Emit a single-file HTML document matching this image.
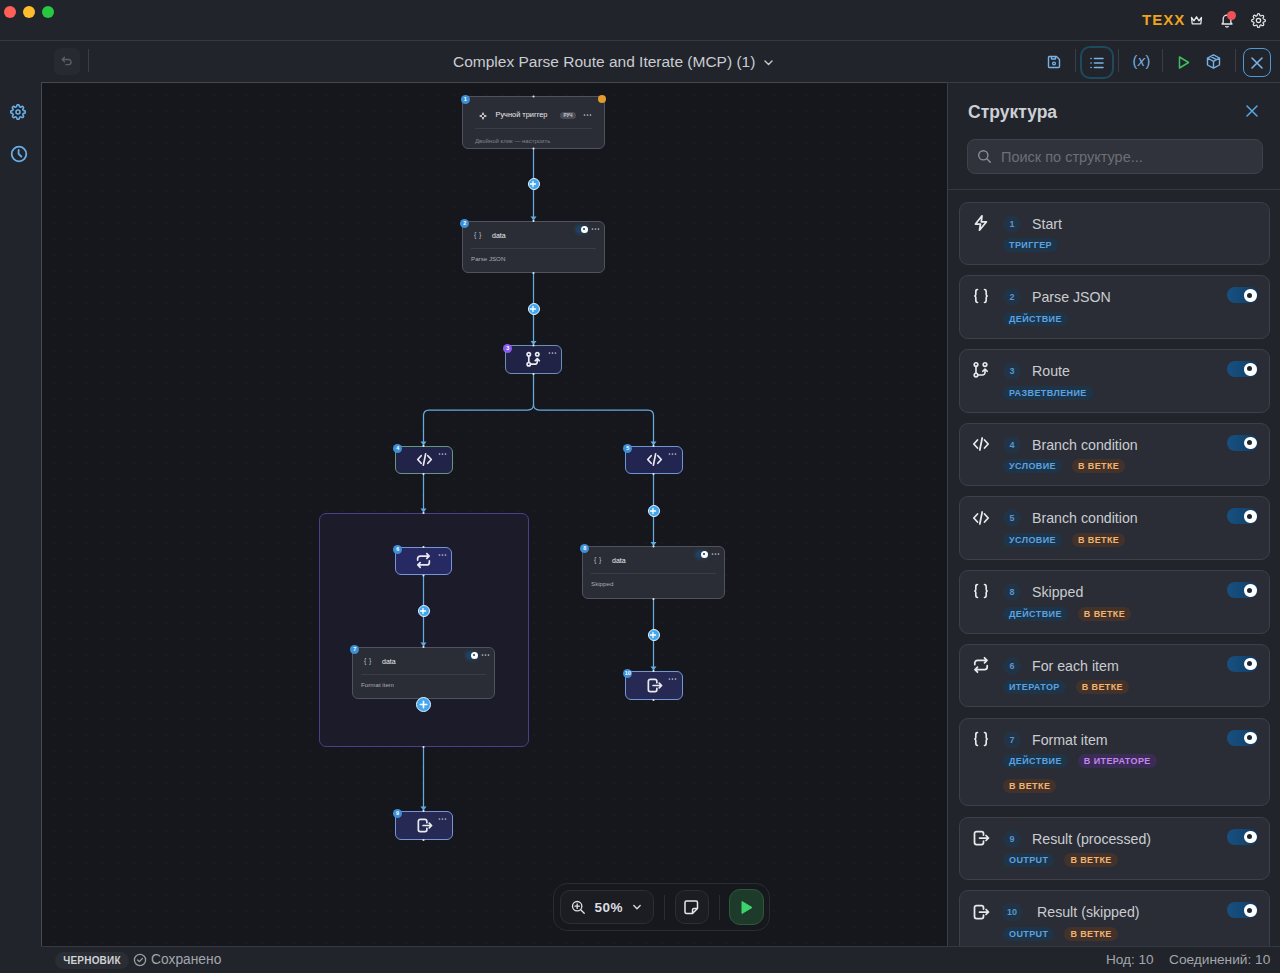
<!DOCTYPE html>
<html><head><meta charset="utf-8">
<style>
*{box-sizing:border-box;margin:0;padding:0}
html,body{width:1280px;height:973px;overflow:hidden;background:#21242b;font-family:"Liberation Sans",sans-serif;color:#d0d3d8}
.abs{position:absolute}
#titlebar{position:absolute;left:0;top:0;width:1280px;height:40px;background:#21242b}
.tl{position:absolute;top:6px;width:12px;height:12px;border-radius:50%}
#toolbar{position:absolute;left:0;top:40px;width:1280px;height:42px;background:#21242b;border-top:1px solid #353841}
#sidebar{position:absolute;left:0;top:82px;width:41px;height:891px;background:#21242b}
#canvas{position:absolute;left:41px;top:82px;width:907px;height:864px;background-color:#16171c;border-left:1px solid #464950;border-top:1px solid #464950;overflow:hidden;
 background-image:radial-gradient(circle,#1b1c22 0.9px,transparent 1.1px);background-size:16px 16px;background-position:4px 4px}
#panel{position:absolute;left:947px;top:82px;width:333px;height:864px;background:#21242b;border-left:1px solid #3a3d45;border-top:1px solid #3a3d45;overflow:hidden}
#status{position:absolute;left:41px;top:946px;width:1239px;height:27px;background:#21242b;border-top:1px solid #353841}
.card{position:absolute;left:11px;width:311px;border-radius:9px;background:#2a2d35;border:1px solid #3d4049}
.num{position:absolute;top:12px;height:18px;border-radius:9px;background:#223345;color:#5597d2;font-size:9px;font-weight:bold;line-height:18px;text-align:center}
.ctitle{position:absolute;left:72px;top:12px;font-size:14.2px;color:#c9ccd1;white-space:nowrap;line-height:18px}
.brow{position:absolute;left:43px;display:flex;gap:10px}
.badge{display:block;height:14px;border-radius:7px;padding:0 6px;font-size:9px;font-weight:bold;letter-spacing:0.4px;line-height:14px;white-space:nowrap}
.tog{position:absolute;left:267px;top:11px;width:31px;height:16px;border-radius:8px;background:linear-gradient(90deg,#175080,#134672 60%,#0f3558)}
.knob{position:absolute;left:17px;top:2px;width:12.5px;height:12.5px;border-radius:50%;background:#fff;border:3.3px solid #fff}
.knob::after{content:"";position:absolute;left:0.45px;top:0.45px;width:5px;height:5px;border-radius:50%;background:#1d2733}
.dnode{position:absolute;border-radius:6px;background:#2a2d35;border:1.5px solid #4f535d}
.dsep{position:absolute;left:8px;right:8px;top:25.5px;height:1px;background:#3a3d46}
.dtitle{position:absolute;left:29px;top:8.5px;font-size:7px;font-weight:normal;color:#eceef1;line-height:10px;white-space:nowrap}
.dsub{position:absolute;left:8px;top:32.4px;font-size:6.2px;color:#a9acb2;line-height:9px;white-space:nowrap}
.dtog{position:absolute;right:16.5px;top:3.5px;width:12px;height:7px;border-radius:3.5px;background:#1b4264;box-shadow:0 0 4px 1px rgba(40,110,170,0.3)}
.dknob{position:absolute;right:0px;top:0;width:7px;height:7px;border-radius:50%;background:#fff}
.dknob::after{content:"";position:absolute;left:2.25px;top:2.25px;width:2.5px;height:2.5px;border-radius:50%;background:#2a2d35}
.snode{position:absolute;border-radius:6px;border:1.8px solid}
.sico{position:absolute;left:50%;top:50%;width:17px;height:17px;margin-left:-8.5px;margin-top:-9px}
.sico svg{display:block}
.plus{position:absolute;border-radius:50%;background:#40a8f0;border:1.2px solid #eaf4fc}
.plus svg{position:absolute;left:-1.2px;top:-1.2px}
.nbadge{position:absolute;width:9px;height:9px;border-radius:50%;font-size:5.5px;font-weight:bold;color:#fff;text-align:center;line-height:9px}
.ndots{position:absolute;font-size:9px;color:#b4b7bd;line-height:6px;letter-spacing:0px}
</style></head><body>
<div id="titlebar">
  <div class="tl" style="left:3.5px;background:#fe5f57"></div>
  <div class="tl" style="left:22.5px;background:#febc2e"></div>
  <div class="tl" style="left:41.5px;background:#28c840"></div>
  <div class="abs" style="left:1142px;top:11px;font-size:15px;font-weight:bold;color:#f0a31c;letter-spacing:1.0px">TEXX</div>
  <svg class="abs" style="left:1189.5px;top:15px" width="13" height="11" viewBox="0 0 13 11"><path d="M1.5 2.5 L4 5.8 L6.5 1.8 L9 5.8 L11.5 2.5 L10.8 8.8 H2.2 Z" fill="none" stroke="#e8e8e8" stroke-width="1.3" stroke-linejoin="round"/></svg>
  <svg class="abs" style="left:1219px;top:12px" width="16" height="17" viewBox="0 0 16 17"><path d="M3 12 H13 L11.8 10.5 V7 a3.8 3.8 0 0 0 -7.6 0 V10.5 Z M6.5 14 a1.6 1.6 0 0 0 3 0" fill="none" stroke="#e6e6e6" stroke-width="1.3" stroke-linejoin="round"/></svg>
  <div class="abs" style="left:1227px;top:11px;width:9px;height:9px;border-radius:50%;background:#f0505a"></div>
  <svg class="abs" style="left:1250.5px;top:12.8px" width="15" height="15" viewBox="0 0 24 24"><path d="M12 15.5a3.5 3.5 0 1 0 0-7 3.5 3.5 0 0 0 0 7Z" fill="none" stroke="#e6e6e6" stroke-width="2"/><path d="M19.4 15a1.65 1.65 0 0 0 .33 1.82l.06.06a2 2 0 1 1-2.83 2.83l-.06-.06a1.65 1.65 0 0 0-1.82-.33 1.65 1.65 0 0 0-1 1.51V21a2 2 0 1 1-4 0v-.09A1.65 1.65 0 0 0 9 19.4a1.65 1.65 0 0 0-1.82.33l-.06.06a2 2 0 1 1-2.83-2.83l.06-.06A1.65 1.65 0 0 0 4.68 15a1.65 1.65 0 0 0-1.51-1H3a2 2 0 1 1 0-4h.09A1.65 1.65 0 0 0 4.6 9a1.65 1.65 0 0 0-.33-1.82l-.06-.06a2 2 0 1 1 2.83-2.83l.06.06A1.65 1.65 0 0 0 9 4.68a1.65 1.65 0 0 0 1-1.51V3a2 2 0 1 1 4 0v.09a1.65 1.65 0 0 0 1 1.51 1.65 1.65 0 0 0 1.82-.33l.06-.06a2 2 0 1 1 2.83 2.83l-.06.06A1.65 1.65 0 0 0 19.4 9a1.65 1.65 0 0 0 1.51 1H21a2 2 0 1 1 0 4h-.09a1.65 1.65 0 0 0-1.51 1Z" fill="none" stroke="#e6e6e6" stroke-width="2"/></svg>
</div>
<div id="toolbar">
  <div class="abs" style="left:54px;top:7px;width:26px;height:27px;border-radius:6px;background:#272a31"></div>
  <svg class="abs" style="left:60px;top:13px" width="14" height="14" viewBox="0 0 14 14"><path d="M4.5 3.2 L2.2 5.5 L4.5 7.8 M2.4 5.5 H8.5 a2.6 2.6 0 0 1 0 5.2 H6" fill="none" stroke="#5b5f68" stroke-width="1.3" stroke-linecap="round" stroke-linejoin="round"/></svg>
  <div class="abs" style="left:88px;top:8px;width:1px;height:23px;background:#3a3d45"></div>
  <div class="abs" id="wtitle" style="left:453px;top:12px;font-size:15.5px;color:#c9ccd2;white-space:nowrap">Complex Parse Route and Iterate (MCP) (1)</div>
  <svg class="abs" style="left:763px;top:16px" width="11" height="11" viewBox="0 0 11 11"><path d="M2 4 L5.5 7.5 L9 4" fill="none" stroke="#c9ccd2" stroke-width="1.4" stroke-linecap="round" stroke-linejoin="round"/></svg>
  <!-- save -->
  <svg class="abs" style="left:1046px;top:13px" width="16" height="16" viewBox="0 0 16 16"><path d="M3 2.5 H10.5 L13.5 5.5 V12.5 a1 1 0 0 1 -1 1 H3.5 a1 1 0 0 1 -1 -1 V3.5 a1 1 0 0 1 1 -1 Z M5.5 2.5 V5 H9.5 V2.5" fill="none" stroke="#78b2e4" stroke-width="1.4" stroke-linejoin="round"/><circle cx="8" cy="9.5" r="1.4" fill="none" stroke="#78b2e4" stroke-width="1.3"/></svg>
  <div class="abs" style="left:1075px;top:8px;width:1px;height:23px;background:#3a3d45"></div>
  <div class="abs" style="left:1080px;top:5px;width:34px;height:33px;border-radius:10px;border:2.5px solid #1d4a5e;background:#21242b"></div>
  <svg class="abs" style="left:1089px;top:14px" width="16" height="16" viewBox="0 0 16 16"><g stroke="#78b2e4" stroke-width="1.6" stroke-linecap="round"><path d="M5.5 3.5 H14 M5.5 8 H14 M5.5 12.5 H14"/><path d="M2 3.5 H2.1 M2 8 H2.1 M2 12.5 H2.1"/></g></svg>
  <div class="abs" style="left:1118px;top:8px;width:1px;height:23px;background:#3a3d45"></div>
  <div class="abs" style="left:1132.5px;top:12px;font-size:14.5px;color:#78b2e4;white-space:nowrap;letter-spacing:0.5px">(<span style="font-style:italic">x</span>)</div>
  <div class="abs" style="left:1162px;top:8px;width:1px;height:23px;background:#3a3d45"></div>
  <svg class="abs" style="left:1176px;top:14px" width="15" height="15" viewBox="0 0 15 15"><path d="M3.5 2 L12.5 7.5 L3.5 13 Z" fill="none" stroke="#3fbf5f" stroke-width="1.5" stroke-linejoin="round"/></svg>
  <svg class="abs" style="left:1205px;top:12px" width="17" height="17" viewBox="0 0 17 17"><path d="M8.5 1.8 L14.5 5 V12 L8.5 15.2 L2.5 12 V5 Z M2.5 5 L8.5 8.3 L14.5 5 M8.5 8.3 V15.2 M5.5 3.4 L11.5 6.6" fill="none" stroke="#78b2e4" stroke-width="1.4" stroke-linejoin="round"/></svg>
  <div class="abs" style="left:1235px;top:8px;width:1px;height:23px;background:#3a3d45"></div>
  <div class="abs" style="left:1243px;top:7px;width:28px;height:29px;border-radius:8px;border:1.5px solid #4d9ad8"></div>
  <svg class="abs" style="left:1249px;top:14px" width="16" height="16" viewBox="0 0 16 16"><path d="M3 3 L13 13 M13 3 L3 13" stroke="#78b2e4" stroke-width="1.6" stroke-linecap="round"/></svg>
</div>
<div id="sidebar">
  <svg class="abs" style="left:10.3px;top:21.8px" width="16" height="16" viewBox="0 0 24 24"><path d="M12 15a3 3 0 1 0 0-6 3 3 0 0 0 0 6Z" fill="none" stroke="#69ade6" stroke-width="2.4"/><path d="M19.4 15a1.65 1.65 0 0 0 .33 1.82l.06.06a2 2 0 1 1-2.83 2.830l-.06-.06a1.65 1.65 0 0 0-1.82-.33 1.65 1.65 0 0 0-1 1.51V21a2 2 0 1 1-4 0v-.09A1.650 1.65 0 0 0 9 19.4a1.65 1.65 0 0 0-1.82.33l-.06.06a2 2 0 1 1-2.83-2.83l.06-.06A1.65 1.65 0 0 0 4.68 15a1.65 1.65 0 0 0-1.51-1H3a2 2 0 1 1 0-4h.09A1.65 1.65 0 0 0 4.6 9a1.65 1.65 0 0 0-.33-1.82l-.06-.06a2 2 0 1 1 2.83-2.83l.06.06A1.65 1.65 0 0 0 9 4.68a1.65 1.65 0 0 0 1-1.510V3a2 2 0 1 1 4 0v.09a1.65 1.65 0 0 0 1 1.51 1.65 1.65 0 0 0 1.82-.33l.06-.06a2 2 0 1 1 2.83 2.83l-.06.06A1.65 1.65 0 0 0 19.4 9a1.65 1.65 0 0 0 1.51 1H21a2 2 0 1 1 0 4h-.09a1.65 1.65 0 0 0-1.51 1Z" fill="none" stroke="#69ade6" stroke-width="2.4"/></svg>
  <svg class="abs" style="left:9.5px;top:63.2px" width="18" height="18" viewBox="0 0 18 18"><circle cx="9" cy="9" r="7.3" fill="none" stroke="#69ade6" stroke-width="1.8"/><path d="M8.6 4.8 V8.8 L11.3 11.5" fill="none" stroke="#69ade6" stroke-width="1.8" stroke-linecap="round"/></svg>
</div>
<div id="canvas"><div class="abs" style="left:-42px;top:-83px;width:1280px;height:973px">
<div class="abs" style="left:319px;top:513px;width:210px;height:234px;border-radius:7px;background:#1c1b29;border:1.5px solid #4b3f8c"></div>
<svg class="abs" style="left:0;top:0" width="1280" height="973"><path d="M533.5 148.5 V221" stroke="#64ace0" stroke-width="1.25" fill="none"/><path d="M530.5 216.5 L536.5 216.5 L533.5 220.5 Z" fill="#64ace0"/><path d="M533.5 273 V345.5" stroke="#64ace0" stroke-width="1.25" fill="none"/><path d="M530.5 341.0 L536.5 341.0 L533.5 345.0 Z" fill="#64ace0"/><path d="M533.5 374 V404.5 Q533.5 410 527.5 410 H429 Q423.5 410 423.5 415.5 V446" stroke="#64ace0" stroke-width="1.25" fill="none"/><path d="M533.5 404.5 Q533.5 410 539.5 410 H648 Q653.5 410 653.5 415.5 V446" stroke="#64ace0" stroke-width="1.25" fill="none"/><path d="M420.5 441.5 L426.5 441.5 L423.5 445.5 Z" fill="#64ace0"/><path d="M650.5 441.5 L656.5 441.5 L653.5 445.5 Z" fill="#64ace0"/><path d="M423.5 474 V513" stroke="#64ace0" stroke-width="1.25" fill="none"/><path d="M420.5 508.5 L426.5 508.5 L423.5 512.5 Z" fill="#64ace0"/><path d="M423.5 575.5 V647" stroke="#64ace0" stroke-width="1.25" fill="none"/><path d="M420.5 642.5 L426.5 642.5 L423.5 646.5 Z" fill="#64ace0"/><path d="M423.5 747 V811" stroke="#64ace0" stroke-width="1.25" fill="none"/><path d="M420.5 806.5 L426.5 806.5 L423.5 810.5 Z" fill="#64ace0"/><path d="M653.5 474 V546.5" stroke="#64ace0" stroke-width="1.25" fill="none"/><path d="M650.5 542.0 L656.5 542.0 L653.5 546.0 Z" fill="#64ace0"/><path d="M653.5 599 V671" stroke="#64ace0" stroke-width="1.25" fill="none"/><path d="M650.5 666.5 L656.5 666.5 L653.5 670.5 Z" fill="#64ace0"/></svg>
<div class="dnode" style="left:462px;top:96px;width:143px;height:53px"><div class="dtitle"></div><div class="dsub"></div></div>
<div class="dnode" style="left:462px;top:221px;width:143px;height:52px"><div class="dsep"></div><div class="dtitle">data</div><div class="dsub">Parse JSON</div><div class="dtog"><div class="dknob"></div></div></div>
<div class="dnode" style="left:352px;top:647px;width:143px;height:52px"><div class="dsep"></div><div class="dtitle">data</div><div class="dsub">Format item</div><div class="dtog"><div class="dknob"></div></div></div>
<div class="dnode" style="left:582px;top:546px;width:143px;height:53px"><div class="dsep"></div><div class="dtitle">data</div><div class="dsub">Skipped</div><div class="dtog"><div class="dknob"></div></div></div>
<div class="snode" style="left:505px;top:345px;width:57px;height:29px;border-color:#6a90b8;background:#202246"><div class="sico"><svg width="17" height="17" viewBox="0 0 18 18"><circle cx="4" cy="3.5" r="1.8" fill="none" stroke="#e9eaee" stroke-width="1.8"/><circle cx="13" cy="3.5" r="1.8" fill="none" stroke="#e9eaee" stroke-width="1.8"/><circle cx="4" cy="14" r="1.8" fill="none" stroke="#e9eaee" stroke-width="1.8"/><path d="M4 5.3 V12.2 M5.8 14 H10.5 a2.5 2.5 0 0 0 2.5 -2.5 V8.5 M10.8 10.3 L13 8 L15.2 10.3" fill="none" stroke="#e9eaee" stroke-width="1.8" stroke-linecap="round" stroke-linejoin="round"/></svg></div></div>
<div class="snode" style="left:395px;top:446px;width:58px;height:28px;border-color:#64987c;background:#212348"><div class="sico"><svg width="17" height="17" viewBox="0 0 18 18"><path d="M5.5 5 L1.8 9 L5.5 13 M12.5 5 L16.2 9 L12.5 13 M10.2 3 L7.8 15" fill="none" stroke="#e9eaee" stroke-width="1.8" stroke-linecap="round" stroke-linejoin="round"/></svg></div></div>
<div class="snode" style="left:625px;top:446px;width:58px;height:28px;border-color:#6f96d4;background:#222550"><div class="sico"><svg width="17" height="17" viewBox="0 0 18 18"><path d="M5.5 5 L1.8 9 L5.5 13 M12.5 5 L16.2 9 L12.5 13 M10.2 3 L7.8 15" fill="none" stroke="#e9eaee" stroke-width="1.8" stroke-linecap="round" stroke-linejoin="round"/></svg></div></div>
<div class="snode" style="left:395px;top:547px;width:57px;height:28px;border-color:#7396d6;background:#272a62"><div class="sico"><svg width="17" height="17" viewBox="0 0 18 18"><path d="M12.5 1.8 L15 4.3 L12.5 6.8 M2.8 8.5 V7 a2.7 2.7 0 0 1 2.7 -2.7 H15 M5.5 16.2 L3 13.7 L5.5 11.2 M15.2 9.5 V11 a2.7 2.7 0 0 1 -2.7 2.7 H3" fill="none" stroke="#e9eaee" stroke-width="1.8" stroke-linecap="round" stroke-linejoin="round"/></svg></div></div>
<div class="snode" style="left:395px;top:811px;width:58px;height:29px;border-color:#7396d6;background:#252953"><div class="sico"><svg width="17" height="17" viewBox="0 0 18 18"><path d="M11.5 6 V4.5 a2 2 0 0 0 -2 -2 H4.5 a2 2 0 0 0 -2 2 V13.5 a2 2 0 0 0 2 2 H9.5 a2 2 0 0 0 2 -2 V12 M7.5 9 H16.5 M14 6.5 L16.5 9 L14 11.5" fill="none" stroke="#e9eaee" stroke-width="1.8" stroke-linecap="round" stroke-linejoin="round"/></svg></div></div>
<div class="snode" style="left:625px;top:671px;width:58px;height:29px;border-color:#7396d6;background:#252953"><div class="sico"><svg width="17" height="17" viewBox="0 0 18 18"><path d="M11.5 6 V4.5 a2 2 0 0 0 -2 -2 H4.5 a2 2 0 0 0 -2 2 V13.5 a2 2 0 0 0 2 2 H9.5 a2 2 0 0 0 2 -2 V12 M7.5 9 H16.5 M14 6.5 L16.5 9 L14 11.5" fill="none" stroke="#e9eaee" stroke-width="1.8" stroke-linecap="round" stroke-linejoin="round"/></svg></div></div>
<svg class="abs" style="left:478.5px;top:111.5px" width="8" height="8" viewBox="0 0 9 9"><path d="M4.5 0.8 C4.9 3.3 5.7 4.1 8.2 4.5 C5.7 4.9 4.9 5.7 4.5 8.2 C4.1 5.7 3.3 4.9 0.8 4.5 C3.3 4.1 4.1 3.3 4.5 0.8 Z" fill="none" stroke="#e6e6e6" stroke-width="1.1" stroke-linejoin="round"/></svg>
<div class="abs" style="left:495.5px;top:110px;font-size:7.4px;font-weight:normal;color:#eceef1;white-space:nowrap;line-height:10px">Ручной триггер</div>
<div class="abs" style="left:560px;top:112px;width:16px;height:7px;border-radius:4px;background:#4a4d55;font-size:4.5px;font-weight:bold;color:#d0d0d0;text-align:center;line-height:7px">РУЧ</div>
<svg class="abs" style="left:583px;top:112px" width="10" height="6" viewBox="0 0 10 6"><g fill="#b8bbc2"><circle cx="1.5" cy="3" r="0.85"/><circle cx="4.5" cy="3" r="0.85"/><circle cx="7.5" cy="3" r="0.85"/></g></svg>
<div class="abs" style="left:475px;top:128px;width:117px;height:1px;background:#3a3d46"></div>
<div class="abs" style="left:475px;top:136.5px;font-size:6px;color:#80838a;white-space:nowrap;line-height:8px">Двойной клик — настроить</div>
<div class="abs" style="left:474px;top:230.3px;font-size:7px;color:#b9bbc0;white-space:nowrap;line-height:9px;letter-spacing:0.3px">{ }</div>
<svg class="abs" style="left:591.0px;top:226.0px" width="10" height="6" viewBox="0 0 10 6"><g fill="#b8bbc2"><circle cx="1.5" cy="3" r="0.85"/><circle cx="4.5" cy="3" r="0.85"/><circle cx="7.5" cy="3" r="0.85"/></g></svg>
<div class="abs" style="left:364px;top:656.3px;font-size:7px;color:#b9bbc0;white-space:nowrap;line-height:9px;letter-spacing:0.3px">{ }</div>
<svg class="abs" style="left:481.0px;top:652.0px" width="10" height="6" viewBox="0 0 10 6"><g fill="#b8bbc2"><circle cx="1.5" cy="3" r="0.85"/><circle cx="4.5" cy="3" r="0.85"/><circle cx="7.5" cy="3" r="0.85"/></g></svg>
<div class="abs" style="left:594px;top:555.3px;font-size:7px;color:#b9bbc0;white-space:nowrap;line-height:9px;letter-spacing:0.3px">{ }</div>
<svg class="abs" style="left:711.0px;top:551.0px" width="10" height="6" viewBox="0 0 10 6"><g fill="#b8bbc2"><circle cx="1.5" cy="3" r="0.85"/><circle cx="4.5" cy="3" r="0.85"/><circle cx="7.5" cy="3" r="0.85"/></g></svg>
<svg class="abs" style="left:547.5px;top:349.5px" width="10" height="6" viewBox="0 0 10 6"><g fill="#b8bbc2"><circle cx="1.5" cy="3" r="0.85"/><circle cx="4.5" cy="3" r="0.85"/><circle cx="7.5" cy="3" r="0.85"/></g></svg>
<svg class="abs" style="left:437.5px;top:450.5px" width="10" height="6" viewBox="0 0 10 6"><g fill="#b8bbc2"><circle cx="1.5" cy="3" r="0.85"/><circle cx="4.5" cy="3" r="0.85"/><circle cx="7.5" cy="3" r="0.85"/></g></svg>
<svg class="abs" style="left:667.5px;top:450.5px" width="10" height="6" viewBox="0 0 10 6"><g fill="#b8bbc2"><circle cx="1.5" cy="3" r="0.85"/><circle cx="4.5" cy="3" r="0.85"/><circle cx="7.5" cy="3" r="0.85"/></g></svg>
<svg class="abs" style="left:437.5px;top:551.5px" width="10" height="6" viewBox="0 0 10 6"><g fill="#b8bbc2"><circle cx="1.5" cy="3" r="0.85"/><circle cx="4.5" cy="3" r="0.85"/><circle cx="7.5" cy="3" r="0.85"/></g></svg>
<svg class="abs" style="left:437.5px;top:815.5px" width="10" height="6" viewBox="0 0 10 6"><g fill="#b8bbc2"><circle cx="1.5" cy="3" r="0.85"/><circle cx="4.5" cy="3" r="0.85"/><circle cx="7.5" cy="3" r="0.85"/></g></svg>
<svg class="abs" style="left:667.5px;top:675.5px" width="10" height="6" viewBox="0 0 10 6"><g fill="#b8bbc2"><circle cx="1.5" cy="3" r="0.85"/><circle cx="4.5" cy="3" r="0.85"/><circle cx="7.5" cy="3" r="0.85"/></g></svg>
<svg class="abs" style="left:0;top:0" width="1280" height="973"><circle cx="533.5" cy="96.5" r="1.05" fill="#e6e8ee"/><circle cx="533.5" cy="148.5" r="1.05" fill="#e6e8ee"/><circle cx="533.5" cy="221" r="1.05" fill="#e6e8ee"/><circle cx="533.5" cy="273" r="1.05" fill="#e6e8ee"/><circle cx="533.5" cy="345.5" r="1.05" fill="#e6e8ee"/><circle cx="533.5" cy="374" r="1.05" fill="#e6e8ee"/><circle cx="423.5" cy="446" r="1.05" fill="#e6e8ee"/><circle cx="423.5" cy="474" r="1.05" fill="#e6e8ee"/><circle cx="653.5" cy="446" r="1.05" fill="#e6e8ee"/><circle cx="653.5" cy="474" r="1.05" fill="#e6e8ee"/><circle cx="423.5" cy="513" r="1.05" fill="#e6e8ee"/><circle cx="423.5" cy="547" r="1.05" fill="#e6e8ee"/><circle cx="423.5" cy="575.5" r="1.05" fill="#e6e8ee"/><circle cx="423.5" cy="647" r="1.05" fill="#e6e8ee"/><circle cx="653.5" cy="546.5" r="1.05" fill="#e6e8ee"/><circle cx="653.5" cy="599" r="1.05" fill="#e6e8ee"/><circle cx="653.5" cy="671" r="1.05" fill="#e6e8ee"/><circle cx="653.5" cy="700" r="1.05" fill="#e6e8ee"/><circle cx="423.5" cy="747" r="1.05" fill="#e6e8ee"/><circle cx="423.5" cy="811" r="1.05" fill="#e6e8ee"/><circle cx="423.5" cy="840" r="1.05" fill="#e6e8ee"/></svg>
<div class="plus" style="left:527.5px;top:178.4px;width:12px;height:12px"><svg width="12" height="12" viewBox="0 0 12 12"><path d="M6 3.4 V8.6 M3.4 6 H8.6" stroke="#fff" stroke-width="1.3" stroke-linecap="round"/></svg></div>
<div class="plus" style="left:527.5px;top:303px;width:12px;height:12px"><svg width="12" height="12" viewBox="0 0 12 12"><path d="M6 3.4 V8.6 M3.4 6 H8.6" stroke="#fff" stroke-width="1.3" stroke-linecap="round"/></svg></div>
<div class="plus" style="left:647.5px;top:504.8px;width:12px;height:12px"><svg width="12" height="12" viewBox="0 0 12 12"><path d="M6 3.4 V8.6 M3.4 6 H8.6" stroke="#fff" stroke-width="1.3" stroke-linecap="round"/></svg></div>
<div class="plus" style="left:647.5px;top:629.3px;width:12px;height:12px"><svg width="12" height="12" viewBox="0 0 12 12"><path d="M6 3.4 V8.6 M3.4 6 H8.6" stroke="#fff" stroke-width="1.3" stroke-linecap="round"/></svg></div>
<div class="plus" style="left:417.5px;top:605px;width:12px;height:12px"><svg width="12" height="12" viewBox="0 0 12 12"><path d="M6 3.4 V8.6 M3.4 6 H8.6" stroke="#fff" stroke-width="1.3" stroke-linecap="round"/></svg></div>
<div class="plus" style="left:416.0px;top:696.9px;width:15.0px;height:15.0px"><svg width="15.0" height="15.0" viewBox="0 0 12 12"><path d="M6 3.4 V8.6 M3.4 6 H8.6" stroke="#fff" stroke-width="1.3" stroke-linecap="round"/></svg></div>
<div class="nbadge" style="left:460.9px;top:94.9px;background:#3d8fd6">1</div>
<div class="nbadge" style="left:460.3px;top:218.5px;background:#3d8fd6">2</div>
<div class="nbadge" style="left:503.4px;top:343.6px;background:#8a5cf0">3</div>
<div class="nbadge" style="left:393.2px;top:444.0px;background:#3d8fd6">4</div>
<div class="nbadge" style="left:623.2px;top:444.0px;background:#3d8fd6">5</div>
<div class="nbadge" style="left:393.2px;top:545.0px;background:#3d8fd6">6</div>
<div class="nbadge" style="left:350.3px;top:645.0px;background:#3d8fd6">7</div>
<div class="nbadge" style="left:580.2px;top:544.0px;background:#3d8fd6">8</div>
<div class="nbadge" style="left:393.0px;top:809.0px;background:#3d8fd6">9</div>
<div class="nbadge" style="left:623.2px;top:669.0px;background:#3d8fd6">10</div>
<div class="abs" style="left:598px;top:95px;width:8px;height:8px;border-radius:50%;background:#e39a2e"></div>
<div class="abs" style="left:553px;top:883px;width:217px;height:48px;border-radius:14px;background:#17181d;border:1px solid #2a2c33"></div>
<div class="abs" style="left:560px;top:890px;width:94px;height:34px;border-radius:10px;background:#1c1d22;border:1px solid #2c2e35"></div>
<svg class="abs" style="left:571px;top:900px" width="15" height="15" viewBox="0 0 17 17"><circle cx="7" cy="7" r="5.3" fill="none" stroke="#e0e1e4" stroke-width="1.5"/><path d="M11 11 L15 15 M7 4.5 V9.5 M4.5 7 H9.5" stroke="#e0e1e4" stroke-width="1.5" stroke-linecap="round"/></svg>
<div class="abs" style="left:594.5px;top:899.5px;font-size:13.5px;font-weight:bold;color:#dcdde0;white-space:nowrap;line-height:16px;letter-spacing:0.5px">50%</div>
<svg class="abs" style="left:632px;top:902px" width="10" height="10" viewBox="0 0 10 10"><path d="M1.8 3.5 L5 6.7 L8.2 3.5" fill="none" stroke="#d6d7db" stroke-width="1.4" stroke-linecap="round" stroke-linejoin="round"/></svg>
<div class="abs" style="left:664px;top:895px;width:1px;height:25px;background:#2a2c33"></div>
<div class="abs" style="left:675px;top:890px;width:34px;height:34px;border-radius:10px;background:#1c1d22;border:1px solid #2c2e35"></div>
<svg class="abs" style="left:683px;top:899px" width="17" height="17" viewBox="0 0 17 17"><path d="M3.5 2 H13 a1.5 1.5 0 0 1 1.5 1.5 V9.5 L9.5 14.5 H3.5 a1.5 1.5 0 0 1 -1.5 -1.5 V3.5 a1.5 1.5 0 0 1 1.5 -1.5 Z M14.5 9.5 H11 a1.5 1.5 0 0 0 -1.5 1.5 V14.5" fill="none" stroke="#e6e7ea" stroke-width="1.5" stroke-linejoin="round"/></svg>
<div class="abs" style="left:718.5px;top:895px;width:1px;height:25px;background:#2a2c33"></div>
<div class="abs" style="left:729px;top:889px;width:35px;height:36px;border-radius:11px;background:#1d3a2a;border:1px solid #2b5a3b"></div>
<svg class="abs" style="left:738px;top:899px" width="17" height="17" viewBox="0 0 17 17"><path d="M4 2.5 L14 8.5 L4 14.5 Z" fill="#3ed26c" stroke="#3ed26c" stroke-width="1" stroke-linejoin="round"/></svg>
</div></div>
<div id="panel">
<div class="abs" style="left:20px;top:19px;font-size:17.5px;font-weight:bold;color:#cdd0d5;white-space:nowrap">Структура</div>
<svg class="abs" style="left:297px;top:21px" width="14" height="14" viewBox="0 0 14 14"><path d="M2 2 L12 12 M12 2 L2 12" stroke="#5aa7e6" stroke-width="1.5" stroke-linecap="round"/></svg>
<div class="abs" style="left:19px;top:56px;width:296px;height:35px;border-radius:8px;background:#30333c;border:1px solid #3f424b"></div>
<svg class="abs" style="left:29px;top:66px" width="15" height="15" viewBox="0 0 15 15"><circle cx="6.3" cy="6.3" r="4.6" fill="none" stroke="#8a8d94" stroke-width="1.4"/><path d="M9.8 9.8 L13.3 13.3" stroke="#8a8d94" stroke-width="1.5" stroke-linecap="round"/></svg>
<div class="abs" style="left:53px;top:65.7px;font-size:14.5px;color:#6c6f77;white-space:nowrap">Поиск по структуре...</div>
<div class="abs" style="left:0;top:106px;width:333px;height:1px;background:#353841"></div>
<div class="card" style="top:118.5px;height:63.5px">
<div class="abs" style="left:12px;top:11.3px"><svg width="18" height="18" viewBox="0 0 18 18"><path d="M10 1.8 L3.5 10 H8.5 L7.5 16.2 L14.5 7.8 H9.3 Z" fill="none" stroke="#e8e9ec" stroke-width="1.75" stroke-linejoin="round"/></svg></div>
<div class="num" style="left:43.0px;width:18px">1</div>
<div class="ctitle">Start</div>
<div class="brow" style="top:35.5px"><span class="badge" style="background:#1e3549;color:#5aa2e2">ТРИГГЕР</span></div>
</div>
<div class="card" style="top:192.2px;height:63.5px">
<div class="abs" style="left:12px;top:11.3px"><svg width="18" height="18" viewBox="0 0 18 18"><path d="M5.5 2.5 C3.8 2.5 3.8 3.5 3.8 5 V7.5 C3.8 8.5 3.2 9 2.2 9 C3.2 9 3.8 9.5 3.8 10.5 V13 C3.8 14.5 3.8 15.5 5.5 15.5 M12.5 2.5 C14.2 2.5 14.2 3.5 14.2 5 V7.5 C14.2 8.5 14.8 9 15.8 9 C14.8 9 14.2 9.5 14.2 10.5 V13 C14.2 14.5 14.2 15.5 12.5 15.5" fill="none" stroke="#e8e9ec" stroke-width="1.65" stroke-linecap="round"/></svg></div>
<div class="num" style="left:43.0px;width:18px">2</div>
<div class="ctitle">Parse JSON</div>
<div class="brow" style="top:35.5px"><span class="badge" style="background:#1e3549;color:#5aa2e2">ДЕЙСТВИЕ</span></div>
<div class="tog"><div class="knob"></div></div>
</div>
<div class="card" style="top:266.0px;height:63.5px">
<div class="abs" style="left:12px;top:11.3px"><svg width="18" height="18" viewBox="0 0 18 18"><circle cx="4" cy="3.5" r="1.8" fill="none" stroke="#e8e9ec" stroke-width="1.65"/><circle cx="13" cy="3.5" r="1.8" fill="none" stroke="#e8e9ec" stroke-width="1.65"/><circle cx="4" cy="14" r="1.8" fill="none" stroke="#e8e9ec" stroke-width="1.65"/><path d="M4 5.3 V12.2 M5.8 14 H10.5 a2.5 2.5 0 0 0 2.5 -2.5 V8.5 M10.8 10.3 L13 8 L15.2 10.3" fill="none" stroke="#e8e9ec" stroke-width="1.65" stroke-linecap="round" stroke-linejoin="round"/></svg></div>
<div class="num" style="left:43.0px;width:18px">3</div>
<div class="ctitle">Route</div>
<div class="brow" style="top:35.5px"><span class="badge" style="background:#1e3549;color:#5aa2e2">РАЗВЕТВЛЕНИЕ</span></div>
<div class="tog"><div class="knob"></div></div>
</div>
<div class="card" style="top:339.7px;height:63.5px">
<div class="abs" style="left:12px;top:11.3px"><svg width="18" height="18" viewBox="0 0 18 18"><path d="M5.5 5 L1.8 9 L5.5 13 M12.5 5 L16.2 9 L12.5 13 M10.2 3 L7.8 15" fill="none" stroke="#e8e9ec" stroke-width="1.75" stroke-linecap="round" stroke-linejoin="round"/></svg></div>
<div class="num" style="left:43.0px;width:18px">4</div>
<div class="ctitle">Branch condition</div>
<div class="brow" style="top:35.5px"><span class="badge" style="background:#1e3549;color:#5aa2e2">УСЛОВИЕ</span><span class="badge" style="background:#42322b;color:#f2b46c">В ВЕТКЕ</span></div>
<div class="tog"><div class="knob"></div></div>
</div>
<div class="card" style="top:413.4px;height:63.5px">
<div class="abs" style="left:12px;top:11.3px"><svg width="18" height="18" viewBox="0 0 18 18"><path d="M5.5 5 L1.8 9 L5.5 13 M12.5 5 L16.2 9 L12.5 13 M10.2 3 L7.8 15" fill="none" stroke="#e8e9ec" stroke-width="1.75" stroke-linecap="round" stroke-linejoin="round"/></svg></div>
<div class="num" style="left:43.0px;width:18px">5</div>
<div class="ctitle">Branch condition</div>
<div class="brow" style="top:35.5px"><span class="badge" style="background:#1e3549;color:#5aa2e2">УСЛОВИЕ</span><span class="badge" style="background:#42322b;color:#f2b46c">В ВЕТКЕ</span></div>
<div class="tog"><div class="knob"></div></div>
</div>
<div class="card" style="top:487.1px;height:63.5px">
<div class="abs" style="left:12px;top:11.3px"><svg width="18" height="18" viewBox="0 0 18 18"><path d="M5.5 2.5 C3.8 2.5 3.8 3.5 3.8 5 V7.5 C3.8 8.5 3.2 9 2.2 9 C3.2 9 3.8 9.5 3.8 10.5 V13 C3.8 14.5 3.8 15.5 5.5 15.5 M12.5 2.5 C14.2 2.5 14.2 3.5 14.2 5 V7.5 C14.2 8.5 14.8 9 15.8 9 C14.8 9 14.2 9.5 14.2 10.5 V13 C14.2 14.5 14.2 15.5 12.5 15.5" fill="none" stroke="#e8e9ec" stroke-width="1.65" stroke-linecap="round"/></svg></div>
<div class="num" style="left:43.0px;width:18px">8</div>
<div class="ctitle">Skipped</div>
<div class="brow" style="top:35.5px"><span class="badge" style="background:#1e3549;color:#5aa2e2">ДЕЙСТВИЕ</span><span class="badge" style="background:#42322b;color:#f2b46c">В ВЕТКЕ</span></div>
<div class="tog"><div class="knob"></div></div>
</div>
<div class="card" style="top:560.8px;height:63.5px">
<div class="abs" style="left:12px;top:11.3px"><svg width="18" height="18" viewBox="0 0 18 18"><path d="M12.5 1.8 L15 4.3 L12.5 6.8 M2.8 8.5 V7 a2.7 2.7 0 0 1 2.7 -2.7 H15 M5.5 16.2 L3 13.7 L5.5 11.2 M15.2 9.5 V11 a2.7 2.7 0 0 1 -2.7 2.7 H3" fill="none" stroke="#e8e9ec" stroke-width="1.75" stroke-linecap="round" stroke-linejoin="round"/></svg></div>
<div class="num" style="left:43.0px;width:18px">6</div>
<div class="ctitle">For each item</div>
<div class="brow" style="top:35.5px"><span class="badge" style="background:#1e3549;color:#5aa2e2">ИТЕРАТОР</span><span class="badge" style="background:#42322b;color:#f2b46c">В ВЕТКЕ</span></div>
<div class="tog"><div class="knob"></div></div>
</div>
<div class="card" style="top:634.5px;height:88.5px">
<div class="abs" style="left:12px;top:11.3px"><svg width="18" height="18" viewBox="0 0 18 18"><path d="M5.5 2.5 C3.8 2.5 3.8 3.5 3.8 5 V7.5 C3.8 8.5 3.2 9 2.2 9 C3.2 9 3.8 9.5 3.8 10.5 V13 C3.8 14.5 3.8 15.5 5.5 15.5 M12.5 2.5 C14.2 2.5 14.2 3.5 14.2 5 V7.5 C14.2 8.5 14.8 9 15.8 9 C14.8 9 14.2 9.5 14.2 10.5 V13 C14.2 14.5 14.2 15.5 12.5 15.5" fill="none" stroke="#e8e9ec" stroke-width="1.65" stroke-linecap="round"/></svg></div>
<div class="num" style="left:43.0px;width:18px">7</div>
<div class="ctitle">Format item</div>
<div class="brow" style="top:35.5px"><span class="badge" style="background:#1e3549;color:#5aa2e2">ДЕЙСТВИЕ</span><span class="badge" style="background:#3a2c55;color:#c585f0">В ИТЕРАТОРЕ</span></div>
<div class="brow" style="top:60px"><span class="badge" style="background:#42322b;color:#f2b46c">В ВЕТКЕ</span></div>
<div class="tog"><div class="knob"></div></div>
</div>
<div class="card" style="top:733.5px;height:63.5px">
<div class="abs" style="left:12px;top:11.3px"><svg width="18" height="18" viewBox="0 0 18 18"><path d="M11.5 6 V4.5 a2 2 0 0 0 -2 -2 H4.5 a2 2 0 0 0 -2 2 V13.5 a2 2 0 0 0 2 2 H9.5 a2 2 0 0 0 2 -2 V12 M7.5 9 H16.5 M14 6.5 L16.5 9 L14 11.5" fill="none" stroke="#e8e9ec" stroke-width="1.75" stroke-linecap="round" stroke-linejoin="round"/></svg></div>
<div class="num" style="left:43.0px;width:18px">9</div>
<div class="ctitle">Result (processed)</div>
<div class="brow" style="top:35.5px"><span class="badge" style="background:#1e3549;color:#5aa2e2">OUTPUT</span><span class="badge" style="background:#42322b;color:#f2b46c">В ВЕТКЕ</span></div>
<div class="tog"><div class="knob"></div></div>
</div>
<div class="card" style="top:807.3px;height:63.5px">
<div class="abs" style="left:12px;top:11.3px"><svg width="18" height="18" viewBox="0 0 18 18"><path d="M11.5 6 V4.5 a2 2 0 0 0 -2 -2 H4.5 a2 2 0 0 0 -2 2 V13.5 a2 2 0 0 0 2 2 H9.5 a2 2 0 0 0 2 -2 V12 M7.5 9 H16.5 M14 6.5 L16.5 9 L14 11.5" fill="none" stroke="#e8e9ec" stroke-width="1.75" stroke-linecap="round" stroke-linejoin="round"/></svg></div>
<div class="num" style="left:41.0px;width:22px">10</div>
<div class="ctitle" style="left:77px">Result (skipped)</div>
<div class="brow" style="top:35.5px"><span class="badge" style="background:#1e3549;color:#5aa2e2">OUTPUT</span><span class="badge" style="background:#42322b;color:#f2b46c">В ВЕТКЕ</span></div>
<div class="tog"><div class="knob"></div></div>
</div>
</div>
<div id="status">
  <div class="abs" style="left:14px;top:5px;width:74px;height:17px;border-radius:9px;background:#2a2d34;font-size:10px;font-weight:bold;color:#cfd1d5;letter-spacing:0.2px;text-align:center;line-height:17px">ЧЕРНОВИК</div>
  <svg class="abs" style="left:92px;top:6px" width="14" height="14" viewBox="0 0 14 14"><circle cx="7" cy="7" r="5.6" fill="none" stroke="#9a9da4" stroke-width="1.3"/><path d="M4.6 7 L6.3 8.6 L9.4 5.5" fill="none" stroke="#9a9da4" stroke-width="1.3" stroke-linecap="round" stroke-linejoin="round"/></svg>
  <div class="abs" style="left:110px;top:5px;font-size:13.8px;color:#a3a6ad;white-space:nowrap">Сохранено</div>
  <div class="abs" style="left:1065px;top:5px;font-size:13.6px;color:#a3a6ad;white-space:nowrap">Нод: 10</div>
  <div class="abs" style="left:1128px;top:5px;font-size:13.7px;color:#a3a6ad;white-space:nowrap">Соединений: 10</div>
</div>
</body></html>
